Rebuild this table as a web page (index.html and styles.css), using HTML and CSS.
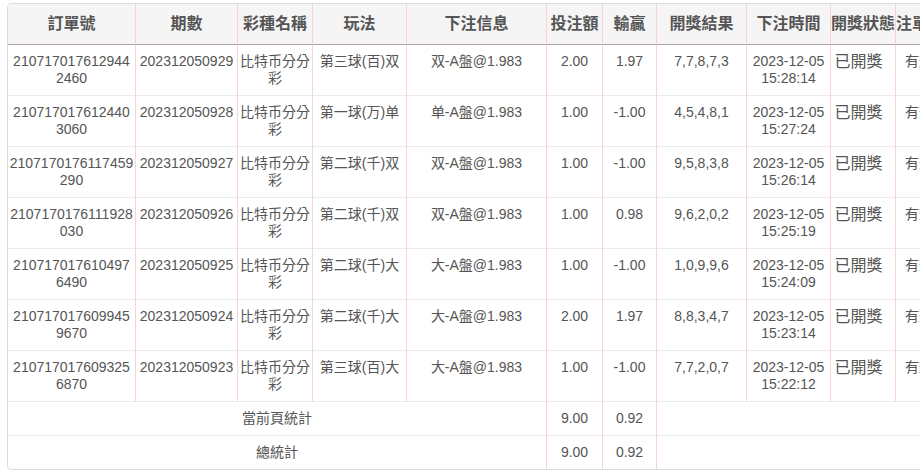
FILE: index.html
```html
<!DOCTYPE html>
<html lang="zh-Hant">
<head>
<meta charset="utf-8">
<title>注單列表</title>
<link rel="stylesheet" href="styles.css">
</head>
<body>
<div class="wrap">
<table class="bets">
<thead>
<tr>
<th class="c1">訂單號</th>
<th class="c2">期數</th>
<th class="c3">彩種名稱</th>
<th class="c4">玩法</th>
<th class="c5">下注信息</th>
<th class="c6">投注額</th>
<th class="c7">輸贏</th>
<th class="c8">開獎結果</th>
<th class="c9">下注時間</th>
<th class="c10">開獎狀態</th>
<th class="c11">注單狀態</th>
</tr>
</thead>
<tbody>
<tr><td>210717017612944<br>2460</td><td>202312050929</td><td>比特币分分彩</td><td>第三球(百)双</td><td>双-A盤@1.983</td><td>2.00</td><td>1.97</td><td>7,7,8,7,3</td><td>2023-12-05 15:28:14</td><td class="st">已開獎</td><td>有效</td></tr>
<tr><td>210717017612440<br>3060</td><td>202312050928</td><td>比特币分分彩</td><td>第一球(万)单</td><td>单-A盤@1.983</td><td>1.00</td><td>-1.00</td><td>4,5,4,8,1</td><td>2023-12-05 15:27:24</td><td class="st">已開獎</td><td>有效</td></tr>
<tr><td>2107170176117459<br>290</td><td>202312050927</td><td>比特币分分彩</td><td>第二球(千)双</td><td>双-A盤@1.983</td><td>1.00</td><td>-1.00</td><td>9,5,8,3,8</td><td>2023-12-05 15:26:14</td><td class="st">已開獎</td><td>有效</td></tr>
<tr><td>2107170176111928<br>030</td><td>202312050926</td><td>比特币分分彩</td><td>第二球(千)双</td><td>双-A盤@1.983</td><td>1.00</td><td>0.98</td><td>9,6,2,0,2</td><td>2023-12-05 15:25:19</td><td class="st">已開獎</td><td>有效</td></tr>
<tr><td>210717017610497<br>6490</td><td>202312050925</td><td>比特币分分彩</td><td>第二球(千)大</td><td>大-A盤@1.983</td><td>1.00</td><td>-1.00</td><td>1,0,9,9,6</td><td>2023-12-05 15:24:09</td><td class="st">已開獎</td><td>有效</td></tr>
<tr><td>210717017609945<br>9670</td><td>202312050924</td><td>比特币分分彩</td><td>第二球(千)大</td><td>大-A盤@1.983</td><td>2.00</td><td>1.97</td><td>8,8,3,4,7</td><td>2023-12-05 15:23:14</td><td class="st">已開獎</td><td>有效</td></tr>
<tr><td>210717017609325<br>6870</td><td>202312050923</td><td>比特币分分彩</td><td>第三球(百)大</td><td>大-A盤@1.983</td><td>1.00</td><td>-1.00</td><td>7,7,2,0,7</td><td>2023-12-05 15:22:12</td><td class="st">已開獎</td><td>有效</td></tr>
</tbody>
<tfoot>
<tr><td colspan="5">當前頁統計</td><td>9.00</td><td>0.92</td><td colspan="4" class="rest"></td></tr>
<tr><td colspan="5">總統計</td><td>9.00</td><td>0.92</td><td colspan="4" class="rest"></td></tr>
</tfoot>
</table>
</div>
</body>
</html>
```

FILE: styles.css
```css
html, body {
  margin: 0;
  padding: 0;
  background: #fff;
  overflow: hidden;
}

body {
  font-family: "Liberation Sans", "Noto Sans CJK TC", "Noto Sans CJK SC", sans-serif;
  font-size: 14px;
  color: #555;
}

.wrap {
  margin: 3px 0 0 7px;
  width: 937px;
  border: 1px solid #dcdcdc;
  border-radius: 4px;
  overflow: hidden;
}

.bets {
  border-collapse: separate;
  border-spacing: 0;
  table-layout: fixed;
  width: 935px;
}

.bets th,
.bets td {
  box-sizing: border-box;
  border-right: 1px solid #f6d3d7;
  text-align: center;
  vertical-align: top;
}

.bets th {
  background: #f5f5f5;
  font-size: 16px;
  font-weight: bold;
  line-height: 20px;
  padding: 10px 0;
  white-space: nowrap;
  color: #555;
  border-bottom: 1px solid #b3a2a2;
}

.bets td {
  padding: 8px 1px;
  line-height: 17px;
  border-bottom: 1px solid #ececec;
  word-break: break-all;
}

.bets tfoot tr:last-child td {
  border-bottom: none;
}

.bets td.rest {
  border-right: none;
}

.bets td.st {
  font-size: 16px;
  padding-right: 10px;
}

.c1 { width: 128px; }
.c2 { width: 102px; }
.c3 { width: 75px; }
.c4 { width: 94px; }
.c5 { width: 140px; }
.c6 { width: 56px; }
.c7 { width: 54px; }
.c8 { width: 90px; }
.c9 { width: 84px; }
.c10 { width: 65px; }
.c11 { width: 47px; }
```
